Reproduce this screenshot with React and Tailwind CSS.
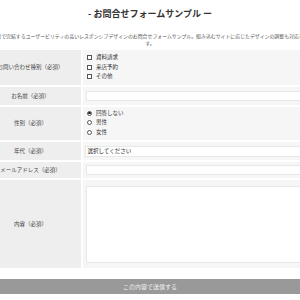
import React from "react";

const jp = { fontFamily: '"Noto Sans CJK JP", "Noto Sans", sans-serif' };

function Box() {
  return <span className="inline-block w-[5px] h-[5px] border-[0.5px] border-[#555] bg-white shrink-0" />;
}

function Radio({ checked }) {
  return (
    <span className="w-[5px] h-[5px] rounded-full border-[0.5px] border-[#555] bg-white shrink-0 flex items-center justify-center">
      {checked && <span className="w-[2.5px] h-[2.5px] rounded-full bg-[#222]" />}
    </span>
  );
}

function Row({ label, children, className = "" }) {
  return (
    <div className="grid grid-cols-[101px_1fr] gap-x-[2px]">
      <div className="bg-[#eeeeee] flex items-center justify-center text-[5.5px] text-[#444]">{label}</div>
      <div className={"bg-[#f6f6f6] " + className}>{children}</div>
    </div>
  );
}

export default function App() {
  return (
    <div className="w-[300px] h-[300px] overflow-hidden bg-white" style={jp}>
      <div className="w-[340px] ml-[-20px]">
        <div className="pt-[8px] text-center text-[9px] font-bold text-[#333] leading-[12px]">- お問合せフォームサンプル ー</div>
        <div className="mt-[12px] text-center text-[4.9px] leading-[7px] text-[#555]">
          <div className="whitespace-nowrap">項目で完結するユーザービリティの高いレスポンシブデザインのお問合せフォームサンプル。組み込むサイトに応じたデザインの調整も対応しま</div>
          <div>す。</div>
        </div>
        <div className="mt-[4px] flex flex-col gap-y-[2px]">
          <Row label="お問い合わせ種別（必須）" className="h-[35px] pl-[4px] pt-[5px] flex flex-col gap-y-[4.5px] text-[5.5px] text-[#333]">
            {["資料請求", "来店予約", "その他"].map((t) => (
              <div key={t} className="flex items-center gap-[4px] h-[5px] leading-[5px]">
                <Box />
                <span>{t}</span>
              </div>
            ))}
          </Row>
          <Row label="お名前（必須）" className="h-[17.5px] pl-[3px] py-[4px]">
            <div className="h-full bg-white border-[0.5px] border-[#e8e8e8]" />
          </Row>
          <Row label="性別（必須）" className="h-[33.5px] pl-[4px] pt-[4px] flex flex-col gap-y-[4.5px] text-[5.5px] text-[#333]">
            {[["回答しない", true], ["男性", false], ["女性", false]].map(([t, c]) => (
              <div key={t} className="flex items-center gap-[4px] h-[5px] leading-[5px]">
                <Radio checked={c} />
                <span>{t}</span>
              </div>
            ))}
          </Row>
          <Row label="年代（必須）" className="h-[18px] pl-[1.5px] py-[3.5px]">
            <div className="h-full bg-white border-[0.5px] border-[#e8e8e8] flex items-center pl-[2px] text-[5.5px] text-[#222]">選択してください</div>
          </Row>
          <Row label="メールアドレス（必須）" className="h-[16px] pl-[3px] py-[3px]">
            <div className="h-full bg-white border-[0.5px] border-[#e8e8e8]" />
          </Row>
          <Row label="内容（必須）" className="h-[88px] pl-[3px] pt-[6px] pb-[5px]">
            <div className="h-full bg-white border-[0.5px] border-[#e8e8e8]" />
          </Row>
        </div>
        <div className="mt-[11px] h-[15px] bg-[#999999] flex items-center justify-center text-[6px] text-[#f0f0f0]">この内容で送信する</div>
      </div>
    </div>
  );
}
